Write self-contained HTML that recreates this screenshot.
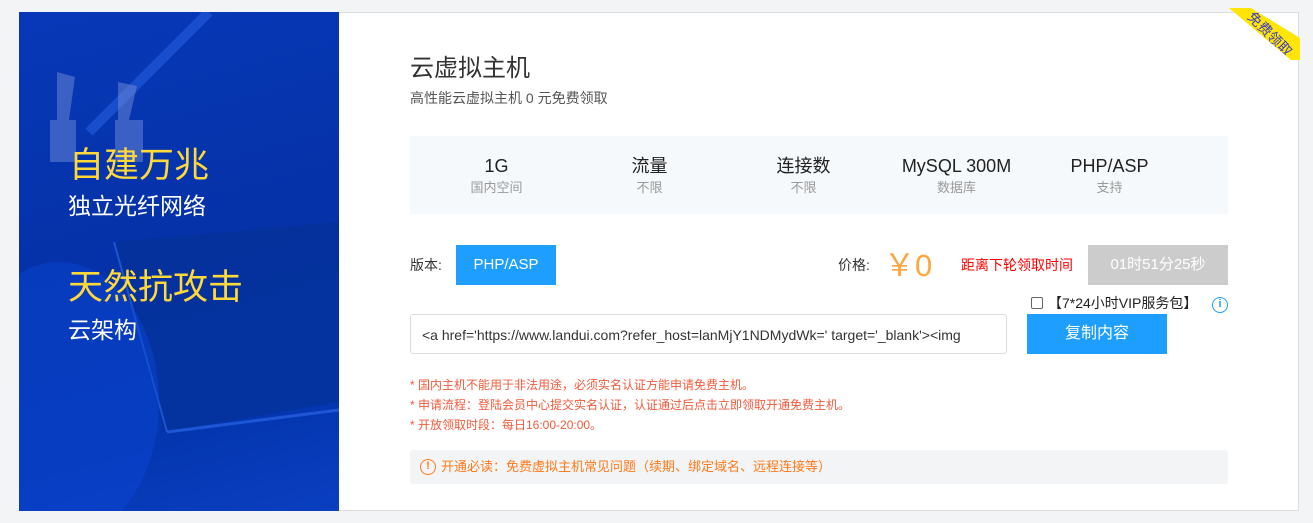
<!DOCTYPE html>
<html><head><meta charset="utf-8"><style>
*{margin:0;padding:0;box-sizing:border-box}
body{width:1313px;height:523px;background:#f3f4f6;font-family:"Liberation Sans","Noto Sans CJK SC",sans-serif;position:relative;overflow:hidden}
.abs{position:absolute;line-height:1.2}
.left{left:19px;top:12px;width:320px;height:499px;background:linear-gradient(165deg,#0838b8 0%,#0532a8 45%,#0436b0 80%,#0a3fc0 100%);overflow:hidden}
.right{left:339px;top:12px;width:960px;height:499px;background:#fff;border:1px solid #ddd;border-left:none}
.spec div.t{font-size:18px;color:#222;height:22px;line-height:22px}
.spec div.s{font-size:13px;color:#999;margin-top:2px;height:18px;line-height:18px}
.col{position:absolute;top:19px;width:153px;text-align:center}
.btn{display:flex;align-items:center;justify-content:center}
</style></head><body>
<div class="abs left">
 <svg class="abs" style="left:0;top:0" width="320" height="499">
  <line x1="70" y1="120" x2="190" y2="0" stroke="#2a66e8" stroke-width="10" opacity=".5"/>
  <polygon points="95,230 320,210 320,390 145,420" fill="#03308f" opacity=".5"/>
  <line x1="95" y1="230" x2="148" y2="420" stroke="#2f6cf0" stroke-width="2" opacity=".6"/>
  <line x1="148" y1="420" x2="320" y2="398" stroke="#2f6cf0" stroke-width="3" opacity=".6"/>
  <ellipse cx="40" cy="390" rx="100" ry="140" fill="#0a48d8" opacity=".45"/>
  <path d="M38 60 L56 65 L50 108 L57 108 L57 150 L31 150 L31 108 L38 108 Z" fill="#6f8cd8" opacity=".5"/>
  <path d="M99 70 L118 74 L110 108 L124 108 L124 150 L96 150 L96 108 L99 108 Z" fill="#6f8cd8" opacity=".5"/>
 </svg>
 <div class="abs" style="left:50px;top:133px;font-size:35px;color:#ffd83a;white-space:nowrap">自建万兆</div>
 <div class="abs" style="left:49px;top:181px;font-size:23px;color:#fff;white-space:nowrap">独立光纤网络</div>
 <div class="abs" style="left:49px;top:255px;font-size:35px;color:#ffd83a;white-space:nowrap">天然抗攻击</div>
 <div class="abs" style="left:49px;top:305px;font-size:23px;color:#fff;white-space:nowrap">云架构</div>
</div>
<div class="abs right"></div>
<div class="abs" style="left:1229px;top:8px;width:71px;height:52px;background:#ffe500;clip-path:polygon(0 0,22px 0,71px 30px,71px 52px,62px 52px)">
 <div class="abs" style="left:6px;top:18px;width:70px;text-align:center;font-size:14px;line-height:16px;color:#3b3bd6;transform:rotate(45deg)">免费领取</div>
</div>
<div class="abs" style="left:410px;top:55px;font-size:24px;color:#333">云虚拟主机</div>
<div class="abs" style="left:410px;top:90px;font-size:14px;color:#555">高性能云虚拟主机 0 元免费领取</div>
<div class="abs spec" style="left:410px;top:136px;width:818px;height:78px;background:#f5f9fc">
 <div class="col" style="left:10px"><div class="t">1G</div><div class="s">国内空间</div></div>
 <div class="col" style="left:163px"><div class="t">流量</div><div class="s">不限</div></div>
 <div class="col" style="left:317px"><div class="t">连接数</div><div class="s">不限</div></div>
 <div class="col" style="left:470px"><div class="t">MySQL 300M</div><div class="s">数据库</div></div>
 <div class="col" style="left:623px"><div class="t">PHP/ASP</div><div class="s">支持</div></div>
</div>
<div class="abs" style="left:410px;top:257px;font-size:14px;color:#333">版本:</div>
<div class="abs btn" style="left:456px;top:245px;width:100px;height:40px;background:#1e9fff;color:#fff;font-size:15px">PHP/ASP</div>
<div class="abs" style="left:838px;top:257px;font-size:14px;color:#333">价格:</div>
<div class="abs" style="left:884px;top:248px;font-size:31px;color:#ffa640;line-height:36px">￥0</div>
<div class="abs" style="left:961px;top:257px;font-size:14px;color:#f00">距离下轮领取时间</div>
<div class="abs btn" style="left:1088px;top:245px;width:140px;height:40px;background:#ccc;color:#fff;font-size:15px">01时51分25秒</div>
<div class="abs" style="left:1031px;top:297px;width:12px;height:12px;border:1px solid #666;border-radius:2px;background:#fff"></div>
<div class="abs" style="left:1048px;top:295px;font-size:14px;color:#222">【7*24小时VIP服务包】</div>
<div class="abs btn" style="left:1212px;top:297px;width:16px;height:16px;border:1.5px solid #1e9fff;border-radius:50%;color:#1e9fff;font-size:11px;font-weight:bold">i</div>
<div class="abs" style="left:410px;top:314px;width:597px;height:40px;border:1px solid #ddd;border-radius:3px;font-size:14px;line-height:40px;padding-left:11px;color:#333;white-space:nowrap;overflow:hidden">&lt;a href='https://www.landui.com?refer_host=lanMjY1NDMydWk=' target='_blank'&gt;&lt;img</div>
<div class="abs btn" style="left:1027px;top:314px;width:140px;height:40px;background:#1e9fff;color:#fff;font-size:16px">复制内容</div>
<div class="abs" style="left:410px;top:375px;font-size:12px;color:#f25a3c;line-height:20px">* 国内主机不能用于非法用途，必须实名认证方能申请免费主机。<br>* 申请流程：登陆会员中心提交实名认证，认证通过后点击立即领取开通免费主机。<br>* 开放领取时段：每日16:00-20:00。</div>
<div class="abs" style="left:410px;top:450px;width:818px;height:34px;background:#f3f4f6;border-radius:3px"></div>
<div class="abs btn" style="left:420px;top:459px;width:16px;height:16px;border:1.5px solid #ff7a1a;border-radius:50%;color:#ff7a1a;font-size:11px;font-weight:bold">!</div>
<div class="abs" style="left:441px;top:459px;font-size:13px;color:#ff7a1a">开通必读：免费虚拟主机常见问题（续期、绑定域名、远程连接等）</div>
</body></html>
